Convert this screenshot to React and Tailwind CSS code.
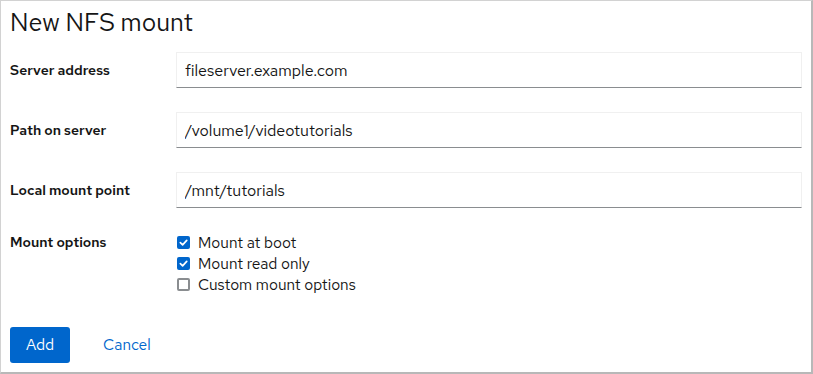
import React, { useState } from 'react'

const font = { fontFamily: '"Red Hat Text", "Open Sans", "Liberation Sans", sans-serif' }

const Field = ({ label, value }) => (
    <div className='flex items-center h-[36px] mb-[24px]'>
        <div className='w-[166px] text-[14px] font-semibold text-[#151515]'>{label}</div>
        <input
            type="text"
            defaultValue={value}
            className='flex-1 h-[36px] px-[8px] text-[16px] text-[#151515] bg-white border border-[#f0f0f0] border-b-[#8a8d90] outline-none'
        />
    </div>
)

const Check = ({ label, checked, onChange }) => (
    <label className='flex items-center h-[21px] cursor-pointer'>
        <span
            onClick={onChange}
            className={checked
                ? 'w-[13px] h-[13px] rounded-[2px] bg-[#0066cc] flex items-center justify-center ml-[1px] mr-[8px]'
                : 'w-[13px] h-[13px] rounded-[2px] bg-white border-2 border-[#8a8d90] ml-[1px] mr-[8px]'}
        >
            {checked && (
                <svg width="9" height="9" viewBox="0 0 10 10">
                    <path d="M1.5 5.2 L4 7.6 L8.6 2.6" stroke="white" strokeWidth="1.9" fill="none" strokeLinecap="round" strokeLinejoin="round" />
                </svg>
            )}
        </span>
        <span className='text-[15.5px] leading-[21px] text-[#151515]'>{label}</span>
    </label>
)

const App = () => {
    const [opts, setOpts] = useState({ boot: true, ro: true, custom: false })
    const toggle = (k) => setOpts({ ...opts, [k]: !opts[k] })

    return (
        <div style={font} className='w-[813px] h-[374px] bg-white border-l border-t border-[#d2d2d2] border-r-2 border-b-2 border-r-[#b8b8b8] border-b-[#b8b8b8] box-border'>
            <h1 className='px-[9px] pt-[4px] h-[51px] text-[25px] leading-[36px] text-[#151515]'>New NFS mount</h1>
            <div className='pl-[9px] pr-[9px]'>
                <Field label="Server address" value="fileserver.example.com" />
                <Field label="Path on server" value="/volume1/videotutorials" />
                <Field label="Local mount point" value="/mnt/tutorials" />
                <div className='flex'>
                    <div className='w-[166px] text-[14px] font-semibold text-[#151515] leading-[21px]'>Mount options</div>
                    <div className='flex flex-col'>
                        <Check label="Mount at boot" checked={opts.boot} onChange={() => toggle('boot')} />
                        <Check label="Mount read only" checked={opts.ro} onChange={() => toggle('ro')} />
                        <Check label="Custom mount options" checked={opts.custom} onChange={() => toggle('custom')} />
                    </div>
                </div>
                <div className='flex items-center mt-[32px]'>
                    <button className='w-[60px] h-[36px] bg-[#0066cc] text-white text-[15.5px] rounded-[3px]'>Add</button>
                    <button className='ml-[17px] px-[16px] h-[36px] text-[#0066cc] text-[15.5px]'>Cancel</button>
                </div>
            </div>
        </div>
    )
}

export default App
